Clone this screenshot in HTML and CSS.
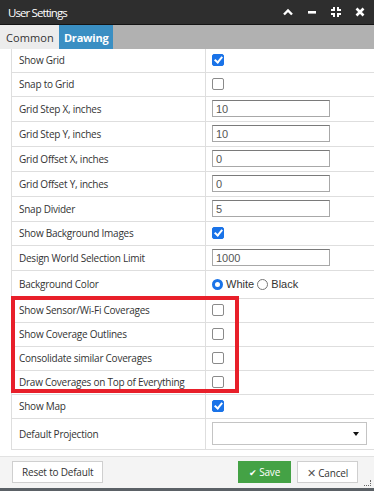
FILE: index.html
```html
<!DOCTYPE html>
<html lang="en">
<head>
    <meta charset="UTF-8">
    <title>User Settings</title>
    <link rel="stylesheet" href="styles.css">
</head>
<body>
<div class="dialog">
    <div class="titlebar">
        <span class="title">User Settings</span>
        <div class="title-icons">
            <svg width="10" height="8" viewBox="0 0 10 8"><path d="M1 6.5 L5 2.5 L9 6.5" stroke="#fff" stroke-width="2.4" fill="none"/></svg>
            <svg width="10" height="8" viewBox="0 0 10 8"><rect x="1" y="3" width="8" height="2.6" fill="#fff"/></svg>
            <svg width="10" height="10" viewBox="0 0 10 10"><path d="M0 3H3V0M7 0V3H10M10 7H7V10M3 10V7H0" stroke="#fff" stroke-width="2" fill="none"/></svg>
            <svg width="10" height="10" viewBox="0 0 10 10"><path d="M1.5 1.5L8.5 8.5M8.5 1.5L1.5 8.5" stroke="#fff" stroke-width="2.6" fill="none"/></svg>
        </div>
    </div>

    <div class="tabs">
        <span class="tab">Common</span>
        <span class="tab active">Drawing</span>
    </div>

    <div class="content">
        <table class="settings">
            <tr class="row-cb"><td>Show Grid</td><td><span class="cb checked"></span></td></tr>
            <tr class="row-cb"><td>Snap to Grid</td><td><span class="cb"></span></td></tr>
            <tr class="row-in"><td>Grid Step X, inches</td><td><input class="field" value="10"></td></tr>
            <tr class="row-in"><td>Grid Step Y, inches</td><td><input class="field" value="10"></td></tr>
            <tr class="row-in"><td>Grid Offset X, inches</td><td><input class="field" value="0"></td></tr>
            <tr class="row-in"><td>Grid Offset Y, inches</td><td><input class="field" value="0"></td></tr>
            <tr class="row-in"><td>Snap Divider</td><td><input class="field" value="5"></td></tr>
            <tr class="row-cb"><td>Show Background Images</td><td><span class="cb checked"></span></td></tr>
            <tr class="row-in"><td>Design World Selection Limit</td><td><input class="field" value="1000"></td></tr>
            <tr class="row-radio"><td>Background Color</td>
                <td><span class="radio on"></span> White <span class="radio"></span> Black</td></tr>
            <tr class="row-cov"><td>Show Sensor/Wi-Fi Coverages</td><td><span class="cb"></span></td></tr>
            <tr class="row-cov"><td>Show Coverage Outlines</td><td><span class="cb"></span></td></tr>
            <tr class="row-cov"><td>Consolidate similar Coverages</td><td><span class="cb"></span></td></tr>
            <tr class="row-cov"><td>Draw Coverages on Top of Everything</td><td><span class="cb"></span></td></tr>
            <tr class="row-cb"><td>Show Map</td><td><span class="cb checked"></span></td></tr>
            <tr class="row-sel"><td>Default Projection</td>
                <td><div class="select"><span class="caret"></span></div></td></tr>
        </table>
        <div class="highlight"></div>
    </div>

    <div class="footer">
        <button class="btn">Reset to Default</button>
        <div class="footer-right">
            <button class="btn btn-save"><span class="tick">&#10004;</span> Save</button>
            <button class="btn"><span class="cross">&#10005;</span> Cancel</button>
        </div>
        <span class="grip"></span>
    </div>
</div>
</body>
</html>
```

FILE: styles.css
```css
body {
    margin: 0;
    font-family: "Open Sans", Arial, sans-serif;
    background: #fff;
}

.dialog {
    width: 374px;
    height: 491px;
    display: flex;
    flex-direction: column;
    position: relative;
    border-bottom: 3px solid #5b6166;
    box-sizing: border-box;
    overflow: hidden;
}

/* Title bar */
.titlebar {
    height: 26px;
    background-color: #2e2e2e;
    border-bottom: 1px solid #141414;
    display: flex;
    align-items: center;
    justify-content: space-between;
    padding: 0 9px 0 8px;
    box-sizing: border-box;
}

.title {
    color: #fff;
    font-size: 11.5px;
    letter-spacing: -0.9px;
}

.title-icons {
    display: flex;
    align-items: center;
    gap: 14px;
}

.title-icons svg {
    display: block;
}

/* Tabs */
.tabs {
    height: 24px;
    background-color: #b1b1b1;
    display: flex;
}

.tab {
    display: flex;
    align-items: center;
    padding: 0 5px 0 6px;
    font-size: 11px;
    color: #333;
    background-color: #ececec;
    letter-spacing: 0.1px;
}

.tab.active {
    background-color: #3a8fc3;
    color: #fff;
    font-weight: bold;
    padding: 0 4px 0 5px;
    letter-spacing: -0.2px;
}

/* Settings table */
.content {
    flex: 1;
    position: relative;
    padding: 0 0 6px 11px;
}

.settings {
    width: 100%;
    border-collapse: collapse;
    font-size: 10px;
    letter-spacing: -0.25px;
    color: #333;
}

.settings td {
    border: 1px solid #dedede;
    border-top: none;
    padding: 0 0 0 7px;
    white-space: nowrap;
}

.settings td:first-child {
    width: 186px;
}

.settings td:last-child {
    border-right: none;
    padding-left: 6px;
    letter-spacing: 0;
}

.row-cb td { height: 23px; }
.row-in td { height: 24px; }
.row-radio td { height: 27px; }
.row-cov td { height: 23px; }
.row-sel td { height: 30px; }

.cb {
    display: inline-block;
    width: 10px;
    height: 10px;
    border: 1px solid #8a8a8a;
    border-radius: 2px;
    vertical-align: middle;
    position: relative;
    top: -1px;
}

.cb.checked {
    background-color: #1a73e8;
    border-color: #1a73e8;
}

.cb.checked::after {
    content: '';
    position: absolute;
    left: 3px;
    top: 0px;
    width: 3px;
    height: 6px;
    border: solid #fff;
    border-width: 0 2px 2px 0;
    transform: rotate(40deg);
}

.field {
    width: 118px;
    height: 17px;
    box-sizing: border-box;
    border: 1px solid #a8a8a8;
    border-top-color: #7a7a7a;
    padding: 0 3px;
    font-family: "Liberation Sans", Arial, sans-serif;
    font-size: 11px;
    color: #555;
    vertical-align: middle;
}

.radio {
    display: inline-block;
    width: 11px;
    height: 11px;
    border: 1px solid #767676;
    border-radius: 50%;
    box-sizing: border-box;
    vertical-align: middle;
    position: relative;
    top: -1px;
}

.radio.on {
    border: 3px solid #1a73e8;
    background: #fff;
}

.row-radio td:last-child {
    font-family: "Liberation Sans", Arial, sans-serif;
    font-size: 11px;
    color: #333;
}

.select {
    width: 155px;
    height: 23px;
    box-sizing: border-box;
    border: 1px solid #c4c4c4;
    display: flex;
    align-items: center;
    justify-content: flex-end;
    padding-right: 7px;
}

.caret {
    width: 0;
    height: 0;
    border-left: 3.5px solid transparent;
    border-right: 3.5px solid transparent;
    border-top: 4px solid #111;
}

/* Annotation box drawn over the coverage rows */
.highlight {
    position: absolute;
    left: 11px;
    top: 247px;
    width: 228px;
    height: 97px;
    border: 4px solid #e81f2a;
    box-sizing: border-box;
}

/* Footer */
.footer {
    height: 32px;
    background-color: #f4f4f4;
    border-top: 1px solid #e2e2e2;
    display: flex;
    align-items: center;
    justify-content: space-between;
    padding: 0 16px 0 12px;
    position: relative;
}

.footer-right {
    display: flex;
    gap: 6px;
}

.btn {
    height: 22px;
    padding: 0 9px;
    background-color: #fff;
    border: 1px solid #cfcfcf;
    font-family: "Open Sans", Arial, sans-serif;
    font-size: 10px;
    letter-spacing: -0.2px;
    color: #333;
}

.btn-save {
    background-color: #44a245;
    border-color: #44a245;
    color: #fff;
    padding: 0 10px;
}

.tick {
    font-size: 9px;
}

.cross {
    font-size: 11px;
    color: #555;
}

.grip {
    position: absolute;
    right: 3px;
    bottom: 2px;
    width: 6px;
    height: 5px;
    border-right: 1px dotted #666;
    border-bottom: 1px dotted #666;
}
```
